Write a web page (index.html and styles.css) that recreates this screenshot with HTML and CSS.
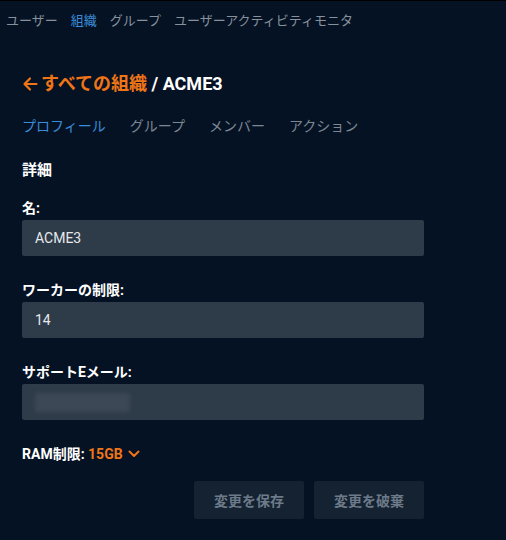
FILE: index.html
```html
<!DOCTYPE html>
<html lang="ja">
<head>
<meta charset="utf-8">
<link rel="stylesheet" href="styles.css">
</head>
<body>
<nav class="topnav">
  <span class="nav-item">ユーザー</span>
  <span class="nav-item active">組織</span>
  <span class="nav-item">グループ</span>
  <span class="nav-item">ユーザーアクティビティモニタ</span>
</nav>
<main class="page">
  <h1 class="title"><span class="back"><svg class="arrow" width="16" height="16" viewBox="0 0 16 16"><path d="M14.5 8H2.5M8 2.5L2.5 8L8 13.5" fill="none" stroke="#f07516" stroke-width="2.2" stroke-linecap="round" stroke-linejoin="round"/></svg>すべての組織</span> / ACME3</h1>
  <div class="tabs">
    <span class="tab active">プロフィール</span>
    <span class="tab">グループ</span>
    <span class="tab">メンバー</span>
    <span class="tab">アクション</span>
  </div>
  <h2 class="section">詳細</h2>
  <div class="field">
    <label class="label">名:</label>
    <div class="input">ACME3</div>
  </div>
  <div class="field">
    <label class="label">ワーカーの制限:</label>
    <div class="input">14</div>
  </div>
  <div class="field">
    <label class="label">サポートEメール:</label>
    <div class="input"><span class="blur"></span></div>
  </div>
  <div class="ram">RAM制限: <span class="ram-value">15GB <svg class="chev" width="12" height="10" viewBox="0 0 12 10"><path d="M1.5 2.5L6 7L10.5 2.5" fill="none" stroke="#f07516" stroke-width="2" stroke-linecap="round" stroke-linejoin="round"/></svg></span></div>
  <div class="actions">
    <button class="btn">変更を保存</button>
    <button class="btn">変更を破棄</button>
  </div>
</main>
</body>
</html>
```
FILE: styles.css
```css
html, body {
  margin: 0;
  padding: 0;
  background: #051224;
}
body {
  font-family: "Roboto", "Noto Sans CJK JP", sans-serif;
  color: #ffffff;
  border-top: 1px solid #000000;
  height: 539px;
  overflow: hidden;
}
.topnav {
  height: 37px;
  display: flex;
  align-items: center;
  gap: 13px;
  padding-left: 6px;
  font-size: 13px;
  color: #87919c;
}
.nav-item.active {
  color: #3a8dd8;
}
.page {
  width: 402px;
  margin-left: 22px;
}
.title {
  margin: 34px 0 0;
  font-size: 18px;
  line-height: 24px;
  font-weight: 700;
  color: #ffffff;
  display: flex;
  align-items: center;
  white-space: pre;
}
.back {
  color: #f07516;
  display: inline-flex;
  align-items: center;
}
.arrow {
  margin-right: 3px;
}
.tabs {
  margin-top: 20px;
  display: flex;
  gap: 24px;
  font-size: 14px;
  line-height: 20px;
  color: #7d8792;
}
.tab.active {
  color: #3a8dd8;
}
.section {
  margin: 24px 0 0;
  font-size: 15px;
  line-height: 20px;
  font-weight: 700;
}
.field {
  margin-top: 19px;
}
.field + .field {
  margin-top: 25px;
}
.label {
  display: block;
  font-size: 14px;
  line-height: 18px;
  font-weight: 700;
  margin-bottom: 3px;
}
.input {
  height: 36px;
  box-sizing: border-box;
  background: #2e3b48;
  border-radius: 2px;
  padding: 0 13px;
  display: flex;
  align-items: center;
  font-size: 14px;
  color: #e6e9ec;
}
.blur {
  display: block;
  width: 95px;
  height: 19px;
  background: #3c4856;
  filter: blur(2px);
}
.ram {
  margin-top: 25px;
  font-size: 14px;
  line-height: 18px;
  font-weight: 700;
  display: flex;
  align-items: center;
  white-space: pre;
}
.ram-value {
  color: #f07516;
  display: inline-flex;
  align-items: center;
}
.chev {
  margin-left: 2px;
}
.actions {
  margin-top: 18px;
  display: flex;
  justify-content: flex-end;
  gap: 10px;
}
.btn {
  width: 110px;
  height: 38px;
  border: none;
  border-radius: 2px;
  background: #142231;
  color: #6c7a89;
  font-family: "Noto Sans CJK JP", sans-serif;
  font-size: 14px;
  font-weight: 700;
  padding: 0;
}
```
